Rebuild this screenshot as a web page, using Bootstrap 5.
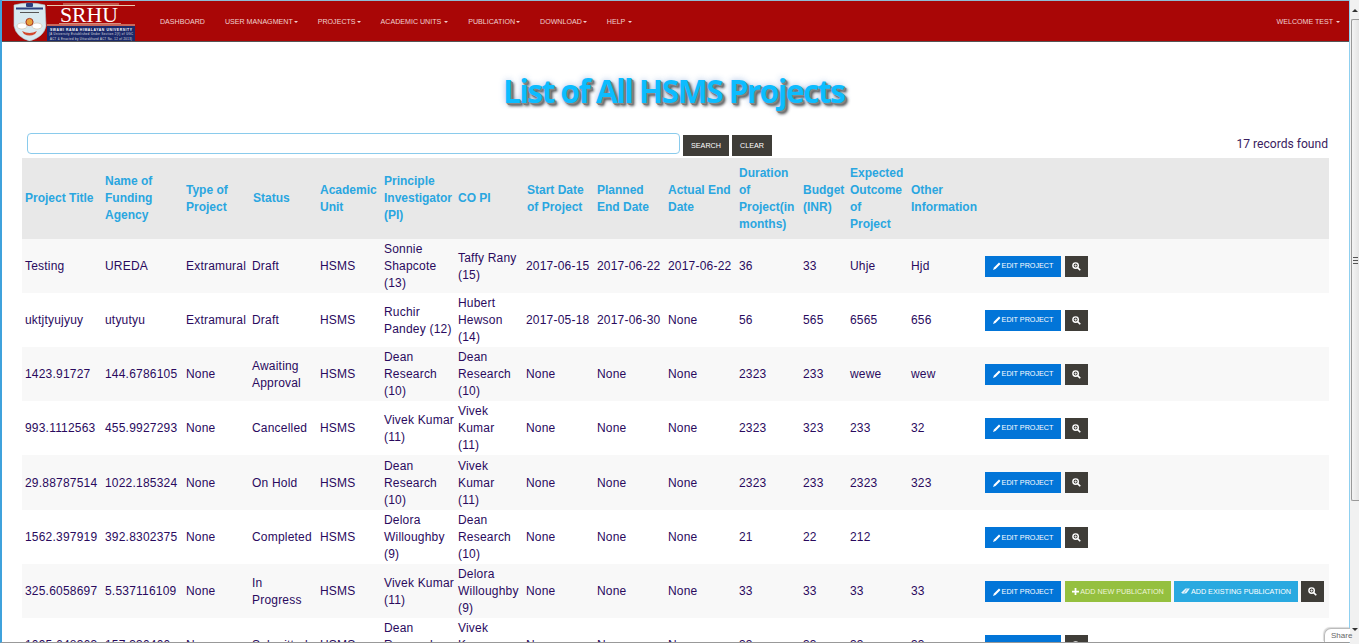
<!DOCTYPE html>
<html lang="en"><head><meta charset="utf-8"><title>List of All HSMS Projects</title>
<link href="https://cdn.jsdelivr.net/npm/bootstrap@5.3.0/dist/css/bootstrap.min.css" rel="stylesheet">
<style>
html,body{height:644px;overflow:hidden;background:#fff}
body{font-family:"Liberation Sans",Arial,sans-serif;font-size:12px;color:#2a0a5e}
.shell{height:644px;display:flex;overflow:hidden;position:relative}
.viewport{width:1347px;height:642px;flex:none;border-left:2px solid #3fa2dc;border-right:1px solid #8fd0f0;border-bottom:1px solid #999;overflow:hidden;box-sizing:content-box}
.rail{flex:1;background:#f1f1f1;display:flex;flex-direction:column;align-items:flex-end}
.tri-up{width:0;height:0;border-left:3px solid transparent;border-right:3px solid transparent;border-bottom:3px solid #333;margin:9px 1px 7px 0}
.thumb{width:8px;height:482px;background:linear-gradient(90deg,#f4f4f4,#e4e4e4);border:1px solid #999;border-right:0;display:flex;align-items:center;justify-content:center;border-radius:2px 0 0 2px}
.grip{width:5px;height:7px;border-top:1px solid #555;border-bottom:1px solid #555;position:relative}
.grip::after{content:"";position:absolute;left:0;right:0;top:2px;border-top:1px solid #555}
.tri-down{width:0;height:0;border-left:3px solid transparent;border-right:3px solid transparent;border-top:3px solid #333;margin:127px 1px 0 0}
.topbar{height:42px;background:#a90606;border-top:1px solid #8fbcd4;border-bottom:1px solid #555;padding:0}
.brandbox{width:122px;height:39px;margin-left:11px;margin-right:25px;flex:none}
.menu a{font-size:7.1px;color:#efd0d0;text-decoration:none;padding:0;white-space:nowrap;text-transform:uppercase;margin-top:2px}
.menu{gap:20px}
.caret-mini{display:inline-block;border-top:2px solid;border-left:2px solid transparent;border-right:2px solid transparent;vertical-align:middle;margin-left:1px}
.welcome{font-size:7.1px;color:#efd0d0;margin-left:auto;margin-right:9px;margin-top:2px;white-space:nowrap}
.pagehead{font-family:"Open Sans","Noto Sans",sans-serif;font-weight:700;font-size:32px;line-height:40px;color:#0cbcff;text-align:center;margin:0;padding:29px 4px 0 0;height:91px;text-shadow:1px 1px 0 #888,2px 2px 0 #777,3px 3px 3px #555,0 0 6px rgba(60,120,200,.45);letter-spacing:-1.71px}
.searchrow{padding-left:25px;padding-right:21px;height:25px}
.searchrow input{width:653px;height:21px;border:1px solid #8acbec;border-radius:4px;padding:0 4px;outline:0;background:#fff;flex:none}
.btn-tiny{font-size:7.2px;line-height:10px;border-radius:0;border:0;padding:0;height:21px;display:inline-flex;align-items:center;justify-content:center;color:#fff;text-transform:uppercase;white-space:nowrap;font-family:"Liberation Sans",Arial,sans-serif;flex:none}
.bt-dark{background:#3f3d38}
.bt-blue{background:#0275d8}
.bt-green{background:#95c03f;color:#eef5d8}
.bt-sky{background:#29a9e0}
.w-search{width:46px;margin-left:3px;margin-top:2px}
.w-clear{width:40px;margin-left:3px;margin-top:2px}
.found{margin-left:auto;font-family:Roboto,"Liberation Sans",sans-serif;font-size:12.1px;color:#3a2060;margin-top:2px}
.gridtable{width:1307px;margin-left:20px;border-collapse:collapse;table-layout:fixed;font-size:12px}
.gridtable th{background:#e8e8e8;color:#2aa6e0;font-weight:700;padding:0 3px;line-height:17px;height:81px;vertical-align:middle}
.gridtable td{padding:1px 2px 0 3px;line-height:17px;height:54px;vertical-align:middle;color:#2a0a5e;letter-spacing:.2px}
.gridtable tbody tr:nth-child(odd) td{background:#f8f8f8}
.gridtable tbody tr:nth-child(5) td{height:55px}
.gridtable tbody tr:nth-child(-n+5) td:last-child{padding-top:0}
.gridtable td:nth-child(4),.gridtable td:nth-child(8){padding-left:2px}
.acts{display:flex;gap:3px;padding-left:4px;letter-spacing:0}
.acts .bt-blue{margin-right:1px}
.w-edit{width:76px;gap:1px}.w-zoom{width:23px}.w-new{width:106px;gap:1px}.w-exist{width:124px;gap:1px}
.btn-tiny svg{flex:none}
.sharetab{position:absolute;right:9px;bottom:2px;width:26px;height:14px;background:#fff;border:1px solid #bbb;border-right:0;border-bottom:0;border-radius:7px 0 0 0;font-size:8px;color:#666;padding-left:6px;line-height:14px;box-shadow:-1px -1px 1px rgba(0,0,0,.15)}
</style></head><body>
<div class="shell">
<div class="viewport">
<nav class="topbar d-flex align-items-center">
<div class="brandbox">
<svg width="122" height="39" viewBox="0 0 122 39">
<path d="M1 3 Q16 -1 32 3 L33 24 Q31 35 16.5 39 Q3 35 1 24 Z" fill="#d8e9ef" stroke="#a8cfd8" stroke-width=".6"/>
<rect x="3" y="5.5" width="27" height="2" fill="#2b3f7e"/>
<rect x="13" y="1" width="7" height="4" rx="1" fill="#2b3f7e"/>
<rect x="7" y="10" width="19" height="1" fill="#555"/>
<ellipse cx="9" cy="24" rx="5" ry="3" fill="#fff" stroke="#c9b18f" stroke-width=".5"/>
<ellipse cx="24" cy="24" rx="5" ry="3" fill="#fff" stroke="#c9b18f" stroke-width=".5"/>
<circle cx="16.5" cy="20" r="3.6" fill="#e9a23b" stroke="#a9331f"/>
<path d="M9 29 Q16.5 33 24 29 L22 32 Q16.5 35 11 32 Z" fill="#d2492e"/>
<rect x="34" y="3" width="88" height="1" fill="#e9c9b0"/>
<rect x="50" y="1.5" width="56" height="1" fill="#e9c9b0" opacity=".8"/>
<text x="47" y="19.5" font-family="Liberation Serif" font-size="22" fill="#fff" textLength="58" lengthAdjust="spacingAndGlyphs">SRHU</text>
<rect x="46" y="21" width="62" height="1" fill="#e9c9b0" opacity=".7"/>
<rect x="34" y="22.5" width="88" height="1" fill="#e9c9b0"/>
<rect x="34" y="24" width="88" height="15" fill="#1b2a6b"/>
<text x="37" y="28.8" font-family="Liberation Sans" font-weight="700" font-size="3.4" fill="#fff" textLength="82">SWAMI RAMA HIMALAYAN UNIVERSITY</text>
<text x="36" y="33.3" font-family="Liberation Sans" font-size="2.7" fill="#e5e5e5" textLength="84">(A University Established Under Section 2(f) of UGC</text>
<text x="37" y="37.8" font-family="Liberation Sans" font-size="2.7" fill="#e5e5e5" textLength="82">ACT &amp; Enacted by Uttarakhand ACT No. 12 of 2013)</text>
</svg></div>
<div class="menu d-flex">
<a href="#">Dashboard</a>
<a href="#">User Managment<span class="caret-mini"></span></a>
<a href="#">Projects<span class="caret-mini"></span></a>
<a href="#">Academic Units <span class="caret-mini"></span></a>
<a href="#">Publication<span class="caret-mini"></span></a>
<a href="#">Download<span class="caret-mini"></span></a>
<a href="#">Help <span class="caret-mini"></span></a>
</div>
<div class="welcome">WELCOME TEST <span class="caret-mini"></span></div>
</nav>
<h1 class="pagehead">List of All HSMS Projects</h1>
<div class="searchrow d-flex">
<input type="text" aria-label="Search">
<button class="btn-tiny bt-dark w-search">Search</button>
<button class="btn-tiny bt-dark w-clear">Clear</button>
<div class="found">17 records found</div>
</div>
<table class="gridtable">
<colgroup><col style="width:80px"><col style="width:81px"><col style="width:67px"><col style="width:67px"><col style="width:64px"><col style="width:74px"><col style="width:69px"><col style="width:70px"><col style="width:71px"><col style="width:71px"><col style="width:64px"><col style="width:47px"><col style="width:61px"><col style="width:70px"><col></colgroup>
<thead><tr><th>Project Title</th><th>Name of Funding Agency</th><th>Type of Project</th><th>Status</th><th>Academic Unit</th><th>Principle Investigator (PI)</th><th>CO PI</th><th>Start Date of Project</th><th>Planned End Date</th><th>Actual End Date</th><th>Duration of Project(in months)</th><th>Budget (INR)</th><th>Expected Outcome of Project</th><th>Other Information</th><th></th></tr></thead>
<tbody id="rows"></tbody>
</table>
</div>
<div class="rail"><div class="tri-up"></div><div class="thumb"><div class="grip"></div></div><div class="tri-down"></div></div>
<div class="sharetab">Share</div>
</div>
<script>
const pen='<svg width="8" height="8" viewBox="0 0 8 8"><path d="M0 8 L1 5.5 L6 .5 L7.5 2 L2.5 7 Z" fill="#fff"/></svg>';
const plus='<svg width="7" height="7" viewBox="0 0 8 8"><path d="M3 0h2v3h3v2H5v3H3V5H0V3h3z" fill="#fff"/></svg>';
const eraser='<svg width="9" height="7" viewBox="0 0 10 8"><path d="M0 5.5 L5 .5 L10 .5 L6 6 L2 6.5 Z" fill="#e8f4fb"/><path d="M3 6 L7 1" stroke="#29a9e0" stroke-width=".6"/></svg>';
const mag='<svg width="9" height="9" viewBox="0 0 10 10"><circle cx="4" cy="4" r="3" fill="none" stroke="#fff" stroke-width="1.6"/><path d="M6.2 6.2 L9.2 9.2" stroke="#fff" stroke-width="1.8"/><path d="M2.6 4H5.4M4 2.6V5.4" stroke="#fff" stroke-width=".8"/></svg>';
const rows=[
["Testing","UREDA","Extramural","Draft","HSMS","Sonnie Shapcote (13)","Taffy Rany (15)","2017-06-15","2017-06-22","2017-06-22","36","33","Uhje","Hjd"],
["uktjtyujyuy","utyutyu","Extramural","Draft","HSMS","Ruchir Pandey (12)","Hubert Hewson (14)","2017-05-18","2017-06-30","None","56","565","6565","656"],
["1423.91727","144.6786105","None","Awaiting Approval","HSMS","Dean Research (10)","Dean Research (10)","None","None","None","2323","233","wewe","wew"],
["993.1112563","455.9927293","None","Cancelled","HSMS","Vivek&nbsp;Kumar (11)","Vivek<br>Kumar<br>(11)","None","None","None","2323","323","233","32"],
["29.88787514","1022.185324","None","On Hold","HSMS","Dean Research (10)","Vivek<br>Kumar<br>(11)","None","None","None","2323","233","2323","323"],
["1562.397919","392.8302375","None","Completed","HSMS","Delora Willoughby (9)","Dean Research (10)","None","None","None","21","22","212",""],
["325.6058697","5.537116109","None","In Progress","HSMS","Vivek&nbsp;Kumar (11)","Delora Willoughby (9)","None","None","None","33","33","33","33"],
["1095.648363","157.330400","None","Submitted","HSMS","Dean Research (10)","Vivek<br>Kumar<br>(11)","None","None","None","33","33","33","33"]];
document.getElementById('rows').innerHTML=rows.map((r,i)=>'<tr>'+r.map(c=>'<td>'+c+'</td>').join('')+'<td><div class="acts"><button class="btn-tiny bt-blue w-edit">'+pen+'Edit Project</button>'+(i==6?'<button class="btn-tiny bt-green w-new">'+plus+'Add New Publication</button><button class="btn-tiny bt-sky w-exist">'+eraser+'Add Existing Publication</button>':'')+'<button class="btn-tiny bt-dark w-zoom">'+mag+'</button></div></td></tr>').join('');
</script>
<script src="https://cdn.jsdelivr.net/npm/bootstrap@5.3.0/dist/js/bootstrap.bundle.min.js"></script>
</body></html>
